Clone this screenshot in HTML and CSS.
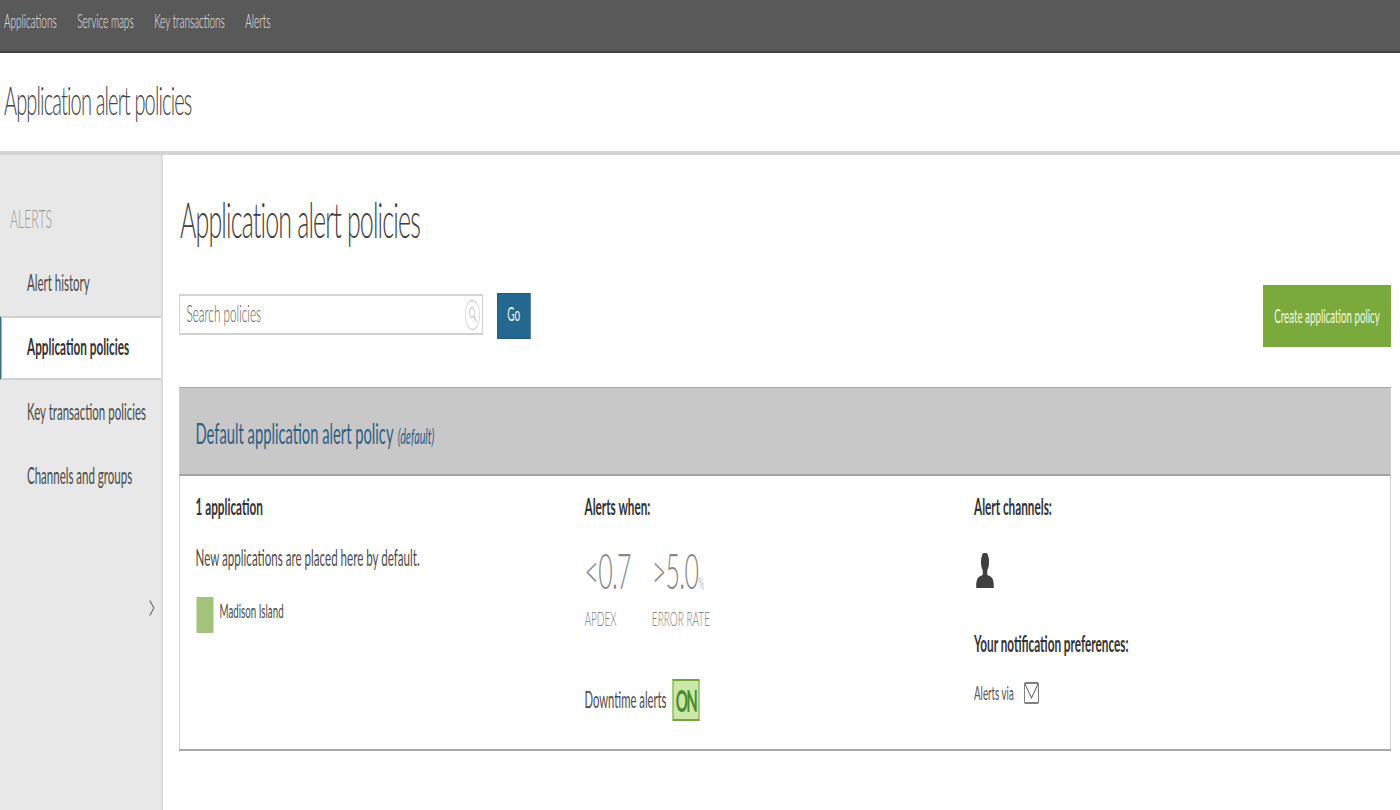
FILE: index.html
```html
<!DOCTYPE html>
<html lang="en">
<head>
<meta charset="utf-8">
<title>Application alert policies</title>
<link rel="stylesheet" href="styles.css">
</head>
<body>
<div class="viewport">
<div class="page">
  <nav class="topbar">
    <a class="toplink">Applications</a>
    <a class="toplink">Service maps</a>
    <a class="toplink">Key transactions</a>
    <a class="toplink">Alerts</a>
  </nav>
  <header class="pagehead"><div class="pagehead-title">Application alert policies</div></header>
  <div class="shell">
    <aside class="sidebar">
      <div class="side-label">ALERTS</div>
      <a class="side-item">Alert history</a>
      <a class="side-item side-active">Application policies</a>
      <a class="side-item">Key transaction policies</a>
      <a class="side-item">Channels and groups</a>
      <div class="side-toggle">
        <svg class="chevron" viewBox="0 0 16 22"><path d="M2 1l11 10L2 21" fill="none" stroke="#555" stroke-width="2"/></svg>
      </div>
    </aside>
    <main class="content">
      <h1 class="title">Application alert policies</h1>
      <div class="toolbar">
        <div class="searchbox">
          <span class="placeholder">Search policies</span>
          <svg class="searchicon" viewBox="0 0 32 32"><ellipse cx="16" cy="16" rx="14.5" ry="14.5" fill="none" stroke="#d4d4d4" stroke-width="1.5"/><circle cx="15" cy="13.5" r="5" fill="none" stroke="#c8c8c8" stroke-width="1.5"/><path d="M18.5 17l5 5" stroke="#c8c8c8" stroke-width="2"/></svg>
        </div>
        <button class="go">Go</button>
        <button class="create">Create application policy</button>
      </div>
      <section class="panel">
        <div class="panel-head"><span class="panel-title">Default application alert policy</span> <em class="panel-tag">(default)</em></div>
        <div class="panel-body">
          <div class="col">
            <div class="col-title">1 application</div>
            <p class="col-note">New applications are placed here by default.</p>
            <div class="app">
              <span class="swatch"></span>
              <span class="app-name">Madison Island</span>
            </div>
          </div>
          <div class="col">
            <div class="col-title">Alerts when:</div>
            <div class="metrics">
              <div class="metric metric-apdex">
                <div class="metric-value">&lt;0.7</div>
                <div class="metric-label">APDEX</div>
              </div>
              <div class="metric">
                <div class="metric-value">&gt;5.0<span class="metric-unit">%</span></div>
                <div class="metric-label">ERROR RATE</div>
              </div>
            </div>
            <div class="downtime"><span class="downtime-label">Downtime alerts</span><span class="badge-on">ON</span></div>
          </div>
          <div class="col">
            <div class="col-title">Alert channels:</div>
            <svg class="person" viewBox="0 0 40 40"><ellipse cx="20" cy="10" rx="9" ry="11" fill="#3f3f3f"/><path d="M15 19h10v5l2 1c8 1 12 4 12.500 10v4H.500v-4C1 29 5 26 13 25l2-1z" fill="#3f3f3f"/></svg>
            <div class="col-title pref-title">Your notification preferences:</div>
            <div class="via"><span class="via-label">Alerts via</span>
              <svg class="mail" viewBox="0 0 30 22"><rect x="1.200" y="1" width="27.600" height="20" rx="1" fill="none" stroke="#555" stroke-width="1.500"/><path d="M2 2l13 14L28 2" fill="none" stroke="#555" stroke-width="1.500"/></svg>
            </div>
          </div>
        </div>
      </section>
    </main>
  </div>
</div>
</div>
</body>
</html>
```
FILE: styles.css
```css
* { box-sizing: border-box; }
html, body { margin: 0; padding: 0; height: 810px; overflow: hidden; background: #fff; }
.viewport { width: 1400px; height: 810px; overflow: hidden; }
.page {
  width: 2800px; height: 810px;
  transform: scaleX(.5); transform-origin: 0 0;
  font-family: "Lato", "Liberation Sans", sans-serif;
  font-weight: 300; color: #444;
  display: flex; flex-direction: column;
}
.topbar {
  height: 53px; background: #595959; border-bottom: 2px solid #3d3d3d;
  display: flex; align-items: center; gap: 41px; padding: 0 0 11px 8px;
}
.toplink { font-size: 20px; color: #e8e8e8; width: max-content; }
.pagehead { height: 98px; padding: 24px 0 0 8px; }
.pagehead-title { font-size: 40px; line-height: 46px; color: #444; letter-spacing: -1.700px; }
.shell { flex: 1; display: flex; border-top: 4px solid #d4d4d4; min-height: 0; }
.sidebar {
  width: 326px; background: #e8e8e8; border-right: 4px solid #dcdcdc;
  padding-top: 52px; display: flex; flex-direction: column;
}
.side-label { font-size: 24.500px; line-height: 24px; color: #999; padding-left: 20px; margin-bottom: 20px; }
.side-item { display: block; font-size: 23px; font-weight: 400; height: 64.500px; line-height: 62px; padding-left: 54px; color: #4a4a4a; white-space: nowrap; }
.side-active {
  background: #fff; font-weight: 700; color: #333; width: 322px; font-size: 23.500px; height: 64px; line-height: 56px;
  border-top: 2px solid #d0d0d0; border-bottom: 2px solid #d0d0d0; border-left: 3px solid #3b6f82;
  padding-left: 51px;
}
.side-toggle { margin-top: 90px; padding-left: 298px; }
.chevron { display: block; width: 12px; height: 18px; }
.content { flex: 1; padding: 35px 18px 0 34px; min-width: 0; }
.title { margin: 0; font-size: 50px; line-height: 58px; font-weight: 300; color: #3f3f3f; letter-spacing: -1.700px; }
.toolbar { display: flex; align-items: flex-start; margin: 37px 0 0 -2px; height: 102px; }
.searchbox {
  width: 608px; height: 41px; margin-top: 9px; border: 2px solid #d2d2d2; background: #fff;
  display: flex; align-items: center; justify-content: space-between; padding: 0 3px 0 13px;
}
.placeholder { font-size: 23.500px; color: #555; padding-bottom: 4px; }
.searchicon { width: 32px; height: 32px; }
.go {
  width: 67px; height: 46px; margin: 8px 0 0 28px; padding: 0 0 6px; border: 1px solid #1d5a80;
  background: #25688f; color: #eef6fb; font: 400 20px "Lato", sans-serif;
}
.create {
  width: 256px; height: 62px; margin-left: auto; padding: 0 0 2px; border: 0;
  background: #7aa93c; color: #f4fbe2; font: 400 19.500px "Lato", sans-serif;
}
.panel { border: 1px solid #a8a8a8; border-bottom-width: 2px; height: 364px; margin-left: -2px; }
.panel-head { height: 88px; background: #c8c8c8; border-bottom: 2px solid #a4a4a4; padding: 26px 0 0 32px; line-height: 38px; }
.panel-title { font-size: 29.500px; font-weight: 400; color: #2d5f85; }
.panel-tag { font-size: 21.500px; font-weight: 400; color: #2d5f85; margin-left: 4px; }
.panel-body { display: grid; grid-template-columns: 778px 779px 1fr; padding: 18px 0 0 32px; }
.col-title { font-size: 23.500px; line-height: 24px; font-weight: 700; color: #333; }
.col-note { margin: 27px 0 0; font-size: 23.200px; font-weight: 400; line-height: 24px; color: #4c4c4c; }
.app { display: flex; margin-top: 14px; }
.swatch { width: 34px; height: 36px; background: #a3c37a; margin: 14px 0 0 2px; }
.app-name { font-size: 19.500px; font-weight: 400; line-height: 24px; margin-left: 12px; margin-top: 16px; color: #4c4c4c; }
.metrics { display: flex; margin-top: 26px; }
.metric { margin-right: 42px; }
.metric-value { font-size: 50px; letter-spacing: -1.500px; line-height: 52px; color: #888; white-space: nowrap; }
.metric-unit { font-size: 15px; line-height: 0; letter-spacing: 0; }
.metric-label { font-size: 20px; line-height: 22px; margin-top: 11px; color: #777; }
.downtime { display: flex; align-items: center; margin-top: 50px; }
.downtime-label { font-size: 22.500px; font-weight: 400; color: #4c4c4c; padding-bottom: 2px; }
.badge-on {
  width: 54px; height: 42px; margin-left: 12px; background: #cbe8a8; border: 2px solid #74a23c;
  font-size: 30px; font-weight: 700; line-height: 38px; letter-spacing: -3px; text-align: center; color: #4b8a2a;
}
.person { display: block; width: 40px; height: 36px; margin: 35px 0 0 2px; }
.pref-title { margin-top: 42px; }
.via { display: flex; align-items: center; margin-top: 26px; }
.via-label { font-size: 19.500px; font-weight: 400; color: #555; }
.mail { width: 30px; height: 22px; margin-left: 20px; }
```
